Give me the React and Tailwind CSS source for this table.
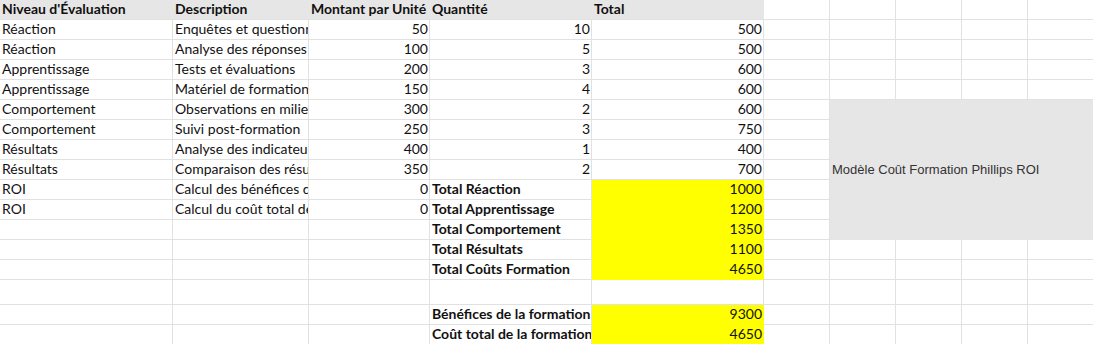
import React from "react";

const rows = [
  { a: "Réaction", b: "Enquêtes et questionnaires de satisfaction", c: "50", d: "10", e: "500" },
  { a: "Réaction", b: "Analyse des réponses", c: "100", d: "5", e: "500" },
  { a: "Apprentissage", b: "Tests et évaluations", c: "200", d: "3", e: "600" },
  { a: "Apprentissage", b: "Matériel de formation", c: "150", d: "4", e: "600" },
  { a: "Comportement", b: "Observations en milieu de travail", c: "300", d: "2", e: "600" },
  { a: "Comportement", b: "Suivi post-formation", c: "250", d: "3", e: "750" },
  { a: "Résultats", b: "Analyse des indicateurs", c: "400", d: "1", e: "400" },
  { a: "Résultats", b: "Comparaison des résultats", c: "350", d: "2", e: "700" },
  { a: "ROI", b: "Calcul des bénéfices de la formation", c: "0", dl: "Total Réaction", e: "1000", y: true },
  { a: "ROI", b: "Calcul du coût total de la formation", c: "0", dl: "Total Apprentissage", e: "1200", y: true },
  { dl: "Total Comportement", e: "1350", y: true },
  { dl: "Total Résultats", e: "1100", y: true },
  { dl: "Total Coûts Formation", e: "4650", y: true },
  { empty: true },
  { dl: "Bénéfices de la formation", e: "9300", y: true },
  { dl: "Coût total de la formation", e: "4650", y: true },
];

function Cell({ children, right, bold, yellow, gray, noRight }) {
  return (
    <div
      className={
        "overflow-hidden whitespace-nowrap leading-[18px] border-b " +
        (noRight ? "" : "border-r ") +
        (right ? "text-right pr-[1px] " : "text-left pl-[2px] ") +
        (bold ? "font-bold " : "") +
        (yellow
          ? "bg-[#ffff00] border-[#ffff00] "
          : gray
          ? "bg-[#e7e6e6] border-r-[#e7e6e6] border-b-[#e1e1e1] "
          : "bg-white border-[#e1e1e1] ")
      }
    >
      {children}
    </div>
  );
}

export default function App() {
  const emptyTail = (key) =>
    [0, 1, 2, 3, 4].map((i) => <Cell key={key + "-t" + i} noRight={i === 4} />);

  return (
    <div className="w-[1093px] h-[344px] overflow-hidden bg-white text-[#111] font-['Lato',sans-serif] text-[14px]">
      <div className="grid grid-cols-[173px_136px_121px_162px_172px_66px_66px_66px_66px_65px] grid-rows-[repeat(14,20px)_25px_20px_20px]">
        {/* header */}
        <Cell bold gray>Niveau d'Évaluation</Cell>
        <Cell bold gray>Description</Cell>
        <Cell bold gray>Montant par Unité</Cell>
        <Cell bold gray>Quantité</Cell>
        <Cell bold gray>Total</Cell>
        {emptyTail("h")}

        {rows.map((r, i) => {
          const rowNum = i + 2;
          const inMerge = rowNum >= 6 && rowNum <= 12;
          const out = [
            <Cell key={i + "a"}>{r.a}</Cell>,
            <Cell key={i + "b"}>{r.b}</Cell>,
            <Cell key={i + "c"} right>{r.c}</Cell>,
            r.dl ? (
              <Cell key={i + "d"} bold>{r.dl}</Cell>
            ) : (
              <Cell key={i + "d"} right>{r.d}</Cell>
            ),
            <Cell key={i + "e"} right yellow={r.y}>{r.e}</Cell>,
            <Cell key={i + "f"} />,
          ];
          if (!inMerge) {
            [0, 1, 2, 3].map((k) =>
              out.push(<Cell key={i + "g" + k} noRight={k === 3} />)
            );
          } else if (rowNum === 6) {
            out.push(
              <div
                key="merge"
                className="col-span-4 row-span-7 bg-[#e7e6e6] flex items-center pl-[2px] font-['Liberation_Sans',Arial,sans-serif] text-[13px] text-[#333] whitespace-nowrap"
              >
                Modèle Coût Formation Phillips ROI
              </div>
            );
          }
          return out;
        })}
      </div>
    </div>
  );
}
